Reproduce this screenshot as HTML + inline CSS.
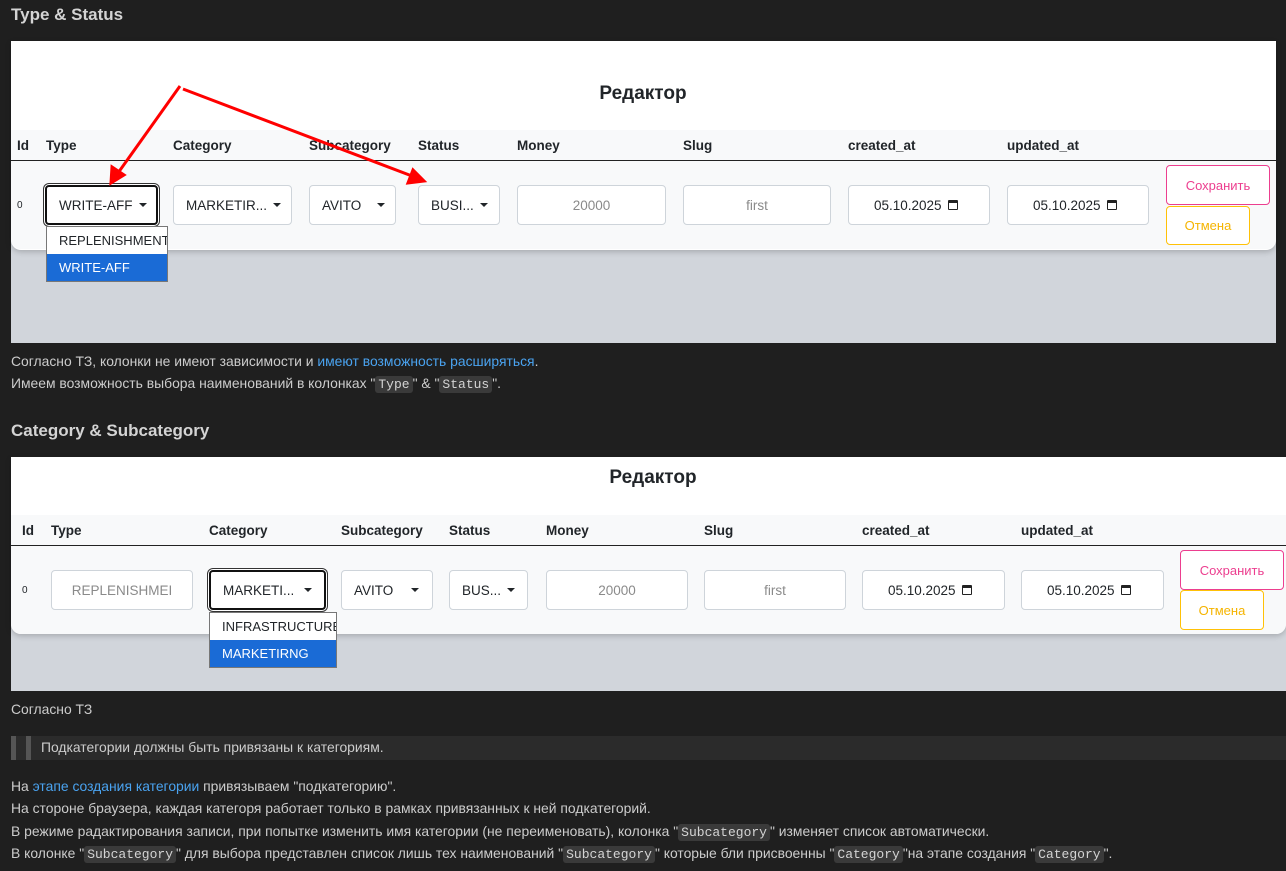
<!DOCTYPE html>
<html><head><meta charset="utf-8"><style>
*{box-sizing:border-box;margin:0;padding:0}
body{width:1286px;height:871px;background:#1f1f1f;font-family:"Liberation Sans","Noto Sans CJK SC",sans-serif;color:#cccccc;position:relative;overflow:hidden;font-size:13px}
.a{position:absolute}
h2{position:absolute;left:11px;font-size:17px;font-weight:bold;color:#d4d4d4}
.p{position:absolute;left:11px;font-size:13.9px;color:#cccccc;white-space:nowrap}
.lnk{color:#4aa3f0}
code{font-family:"Liberation Mono",monospace;background:#3a3a3a;border-radius:3px;padding:1px 3px;font-size:13px;color:#d4d4d4}
.th{position:absolute;font-size:13.5px;font-weight:bold;color:#212529}
.ctl{position:absolute;height:40px;background:#fff;border:1px solid #ced4da;border-radius:4px;font-size:13.5px;color:#212529;display:flex;align-items:center;padding-left:12px;white-space:nowrap;overflow:hidden}
.ph{color:#8a8a8a;justify-content:center;padding-left:0}
.car{display:inline-block;width:0;height:0;border-left:4px solid transparent;border-right:4px solid transparent;border-top:4px solid #212529;margin-left:6px}
.foc{border:2px solid #111;box-shadow:0 0 0 1px #fff,0 0 0 2px #333}
.cal{display:inline-block;width:10px;height:10px;border:1.5px solid #222;border-top-width:3px;margin-left:6px;border-radius:1px}
.dd{position:absolute;background:#fff;border:1px solid #777;font-size:13px;color:#212529;overflow:hidden}
.dd div{height:27px;line-height:27px;padding-left:12px;white-space:nowrap}
.dd .sel{background:#1a6bd6;color:#fff}
.btn{position:absolute;border-radius:4px;background:#fff;font-size:13px;display:flex;align-items:center;justify-content:center}
.ttl{font-size:19px;font-weight:bold;color:#212529;text-align:center}
</style></head><body>

<h2 style="top:5px">Type &amp; Status</h2>
<div class="a" style="left:11px;top:41px;width:1265px;height:302px;background:#d1d5db"></div>
<div class="a" style="left:11px;top:41px;width:1265px;height:209px;background:#fff;border-radius:0 0 10px 10px;box-shadow:0 2px 6px rgba(0,0,0,.2)"></div>
<div class="a" style="left:11px;top:130px;width:1265px;height:119px;background:#f8f9fa;border-radius:0 0 10px 10px"></div>
<div class="a" style="left:11px;top:160px;width:1265px;height:1px;background:#222"></div>
<div class="a ttl" style="left:0;top:83px;width:1286px">Редактор</div>
<div class="th" style="left:17px;top:138px">Id</div>
<div class="th" style="left:46px;top:138px">Type</div>
<div class="th" style="left:173px;top:138px">Category</div>
<div class="th" style="left:309px;top:138px">Subcategory</div>
<div class="th" style="left:418px;top:138px">Status</div>
<div class="th" style="left:517px;top:138px">Money</div>
<div class="th" style="left:683px;top:138px">Slug</div>
<div class="th" style="left:848px;top:138px">created_at</div>
<div class="th" style="left:1007px;top:138px">updated_at</div>
<div class="a" style="left:17px;top:200px;font-size:10px;color:#212529">0</div>
<div class="ctl foc" style="left:45px;top:185px;width:113px">WRITE-AFF<span class="car"></span></div>
<div class="ctl" style="left:173px;top:185px;width:119px">MARKETIR...<span class="car"></span></div>
<div class="ctl" style="left:309px;top:185px;width:87px">AVITO<span class="car" style="margin-left:16px"></span></div>
<div class="ctl" style="left:418px;top:185px;width:82px">BUSI...<span class="car"></span></div>
<div class="ctl ph" style="left:517px;top:185px;width:149px">20000</div>
<div class="ctl ph" style="left:683px;top:185px;width:148px">first</div>
<div class="ctl" style="left:848px;top:185px;width:142px;padding-left:25px">05.10.2025<span class="cal"></span></div>
<div class="ctl" style="left:1007px;top:185px;width:142px;padding-left:25px">05.10.2025<span class="cal"></span></div>
<div class="btn" style="left:1166px;top:165px;width:104px;height:40px;border:1px solid #ec3e8f;color:#ec3e8f">Сохранить</div>
<div class="btn" style="left:1166px;top:206px;width:84px;height:39px;border:1px solid #ffc107;color:#f5b400">Отмена</div>
<div class="dd" style="left:46px;top:226px;width:122px"><div>REPLENISHMENT</div><div class="sel">WRITE-AFF</div></div>
<svg class="a" style="left:0;top:0" width="1286" height="300">
<g stroke="#f00" stroke-width="3" fill="#f00">
<line x1="180" y1="86" x2="118" y2="173"/><polygon points="111,183 112,167 124,175"/>
<line x1="183" y1="89" x2="412" y2="176"/><polygon points="424,181 408,183 413,170"/>
</g></svg>

<div class="p" style="top:353px">Согласно ТЗ, колонки не имеют зависимости и <span class="lnk">имеют возможность расширяться</span>.</div>
<div class="p" style="top:375px">Имеем возможность выбора наименований в колонках "<code>Type</code>" &amp; "<code>Status</code>".</div>

<h2 style="top:421px">Category &amp; Subcategory</h2>
<div class="a" style="left:11px;top:457px;width:1275px;height:234px;background:#d1d5db"></div>
<div class="a" style="left:11px;top:457px;width:1275px;height:177px;background:#fff;border-radius:0 0 10px 10px;box-shadow:0 2px 6px rgba(0,0,0,.2)"></div>
<div class="a" style="left:11px;top:515px;width:1275px;height:119px;background:#f8f9fa;border-radius:0 0 10px 10px"></div>
<div class="a" style="left:11px;top:545px;width:1275px;height:1px;background:#222"></div>
<div class="a ttl" style="left:20px;top:467px;width:1266px">Редактор</div>
<div class="th" style="left:22px;top:523px">Id</div>
<div class="th" style="left:51px;top:523px">Type</div>
<div class="th" style="left:209px;top:523px">Category</div>
<div class="th" style="left:341px;top:523px">Subcategory</div>
<div class="th" style="left:449px;top:523px">Status</div>
<div class="th" style="left:546px;top:523px">Money</div>
<div class="th" style="left:704px;top:523px">Slug</div>
<div class="th" style="left:862px;top:523px">created_at</div>
<div class="th" style="left:1021px;top:523px">updated_at</div>
<div class="a" style="left:22px;top:585px;font-size:10px;color:#212529">0</div>
<div class="ctl ph" style="left:51px;top:570px;width:142px">REPLENISHMEI</div>
<div class="ctl foc" style="left:209px;top:570px;width:117px">MARKETI...<span class="car" style="margin-left:10px"></span></div>
<div class="ctl" style="left:341px;top:570px;width:92px">AVITO<span class="car" style="margin-left:18px"></span></div>
<div class="ctl" style="left:449px;top:570px;width:79px">BUS...<span class="car"></span></div>
<div class="ctl ph" style="left:546px;top:570px;width:142px">20000</div>
<div class="ctl ph" style="left:704px;top:570px;width:142px">first</div>
<div class="ctl" style="left:862px;top:570px;width:143px;padding-left:25px">05.10.2025<span class="cal"></span></div>
<div class="ctl" style="left:1021px;top:570px;width:143px;padding-left:25px">05.10.2025<span class="cal"></span></div>
<div class="btn" style="left:1180px;top:550px;width:104px;height:40px;border:1px solid #ec3e8f;color:#ec3e8f">Сохранить</div>
<div class="btn" style="left:1180px;top:590px;width:84px;height:40px;border:1px solid #ffc107;color:#f5b400">Отмена</div>
<div class="dd" style="left:209px;top:612px;width:128px"><div>INFRASTRUCTURE</div><div class="sel">MARKETIRNG</div></div>

<div class="p" style="top:701px">Согласно ТЗ</div>
<div class="a" style="left:11px;top:736px;width:1275px;height:24px;background:#2b2b2b"></div>
<div class="a" style="left:11px;top:736px;width:5px;height:24px;background:#555"></div>
<div class="a" style="left:26px;top:736px;width:5px;height:24px;background:#555"></div>
<div class="p" style="left:41px;top:739px">Подкатегории должны быть привязаны к категориям.</div>
<div class="p" style="top:778px">На <span class="lnk">этапе создания категории</span> привязываем "подкатегорию".</div>
<div class="p" style="top:800px">На стороне браузера, каждая категоря работает только в рамках привязанных к ней подкатегорий.</div>
<div class="p" style="top:823px">В режиме радактирования записи, при попытке изменить имя категории (не переименовать), колонка "<code>Subcategory</code>" изменяет список автоматически.</div>
<div class="p" style="top:845px">В колонке "<code>Subcategory</code>" для выбора представлен список лишь тех наименований "<code>Subcategory</code>" которые бли присвоенны "<code>Category</code>"на этапе создания "<code>Category</code>".</div>
</body></html>
